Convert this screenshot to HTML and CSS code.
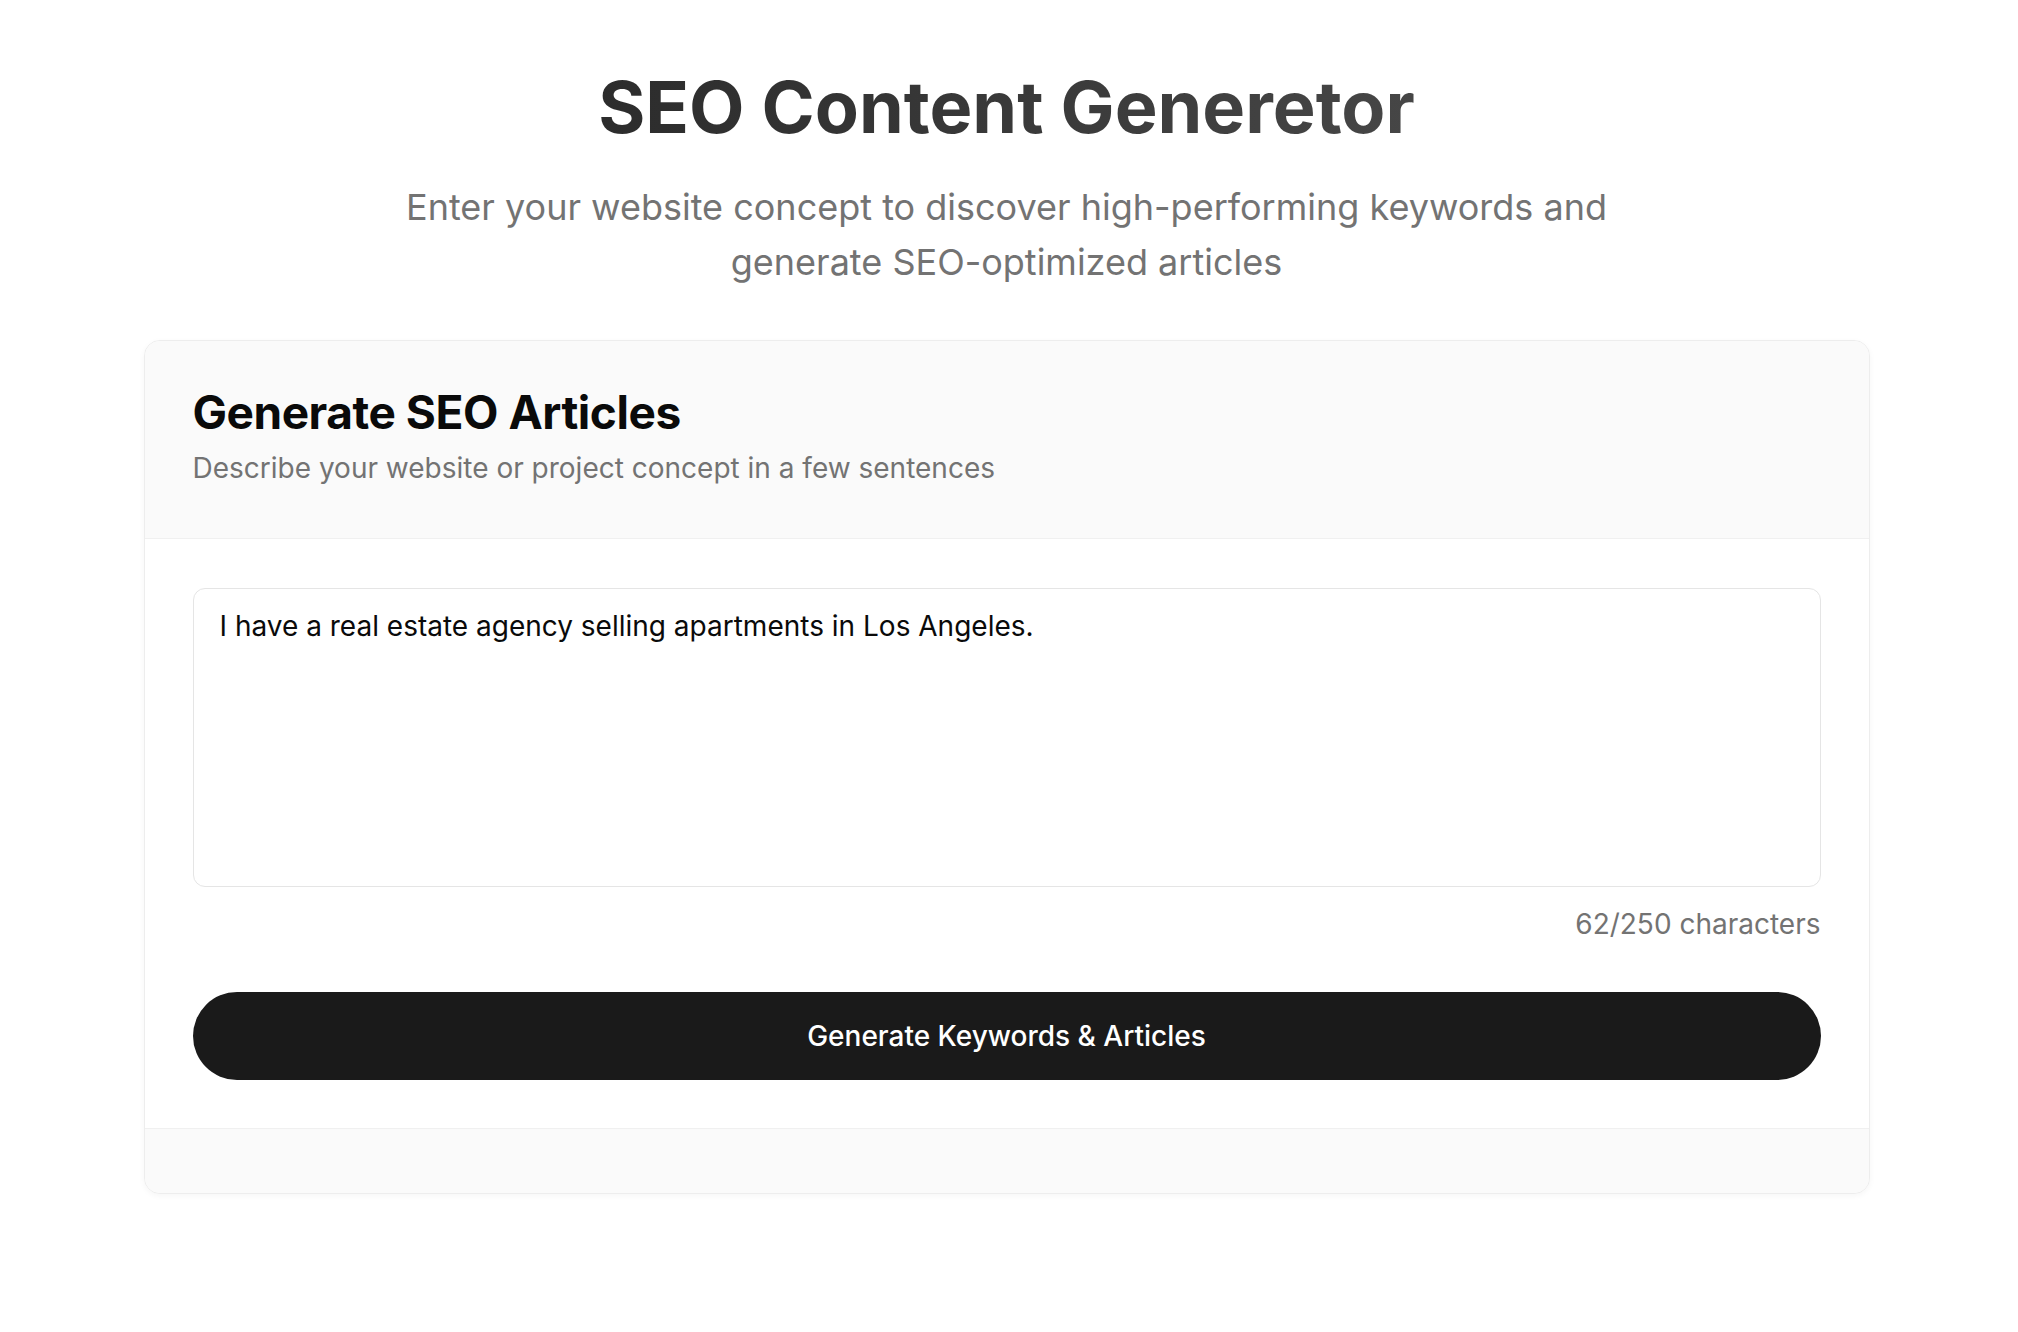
FILE: index.html
```html
<!DOCTYPE html>
<html lang="en">
<head>
<meta charset="utf-8">
<title>SEO Content Generetor</title>
<link rel="stylesheet" href="styles.css">
</head>
<body>
<main class="page">
  <header class="hero">
    <h1 class="hero-title">SEO Content Generetor</h1>
    <p class="hero-sub">Enter your website concept to discover high-performing keywords and generate SEO-optimized articles</p>
  </header>
  <section class="card">
    <div class="card-header">
      <h2 class="card-title">Generate SEO Articles</h2>
      <p class="card-desc">Describe your website or project concept in a few sentences</p>
    </div>
    <div class="card-body">
      <textarea class="concept" maxlength="250">I have a real estate agency selling apartments in Los Angeles.</textarea>
      <div class="counter">62/250 characters</div>
      <button class="generate" type="button">Generate Keywords &amp; Articles</button>
    </div>
    <div class="card-footer"></div>
  </section>
</main>
</body>
</html>
```
FILE: styles.css
```css
* { box-sizing: border-box; }
html, body { margin: 0; padding: 0; background: #ffffff; }
body { font-family: Inter, "Noto Sans", "Liberation Sans", sans-serif; color: #0a0a0a; }

.page {
  display: flex;
  flex-direction: column;
  align-items: center;
  padding: 64px 5px 80px 0;
}

.hero { display: flex; flex-direction: column; align-items: center; text-align: center; }

.hero-title {
  margin: 0;
  font-size: 72px;
  line-height: 1.2;
  font-weight: 700;
  background: linear-gradient(90deg, #2c2c2c, #464646);
  -webkit-background-clip: text;
  background-clip: text;
  color: transparent;
}

.hero-sub {
  margin: 30px 0 0;
  max-width: 1260px;
  font-size: 36px;
  line-height: 55px;
  color: #737373;
}

.card {
  width: 1726px;
  margin-top: 50px;
  border: 1px solid #ededed;
  border-radius: 16px;
  overflow: hidden;
  background: #ffffff;
  box-shadow: 0 2px 6px rgba(0, 0, 0, 0.04);
}

.card-header {
  background: #fafafa;
  padding: 44px 48px 49px;
  border-bottom: 1px solid #f0f0f0;
}

.card-title {
  margin: 0;
  font-size: 46px;
  line-height: 1.2;
  font-weight: 700;
  letter-spacing: -0.01em;
  color: #0a0a0a;
}

.card-desc {
  margin: 6px 0 0;
  font-size: 28px;
  line-height: 1.5;
  color: #737373;
}

.card-body {
  display: flex;
  flex-direction: column;
  padding: 49px 48px 48px;
}

.concept {
  display: block;
  width: 100%;
  height: 299px;
  padding: 16px 26px;
  border: 1px solid #e5e5e5;
  border-radius: 12px;
  font-family: inherit;
  font-size: 28px;
  line-height: 1.5;
  color: #0a0a0a;
  background: #ffffff;
  resize: none;
  outline: none;
}

.counter {
  margin-top: 16px;
  text-align: right;
  font-size: 28px;
  line-height: 1.5;
  color: #737373;
}

.generate {
  margin-top: 47px;
  height: 88px;
  border: none;
  border-radius: 999px;
  background: #1a1a1a;
  color: #ffffff;
  font-family: inherit;
  font-size: 28px;
  font-weight: 500;
  cursor: pointer;
}

.card-footer {
  height: 65px;
  background: #fafafa;
  border-top: 1px solid #f0f0f0;
}
```
